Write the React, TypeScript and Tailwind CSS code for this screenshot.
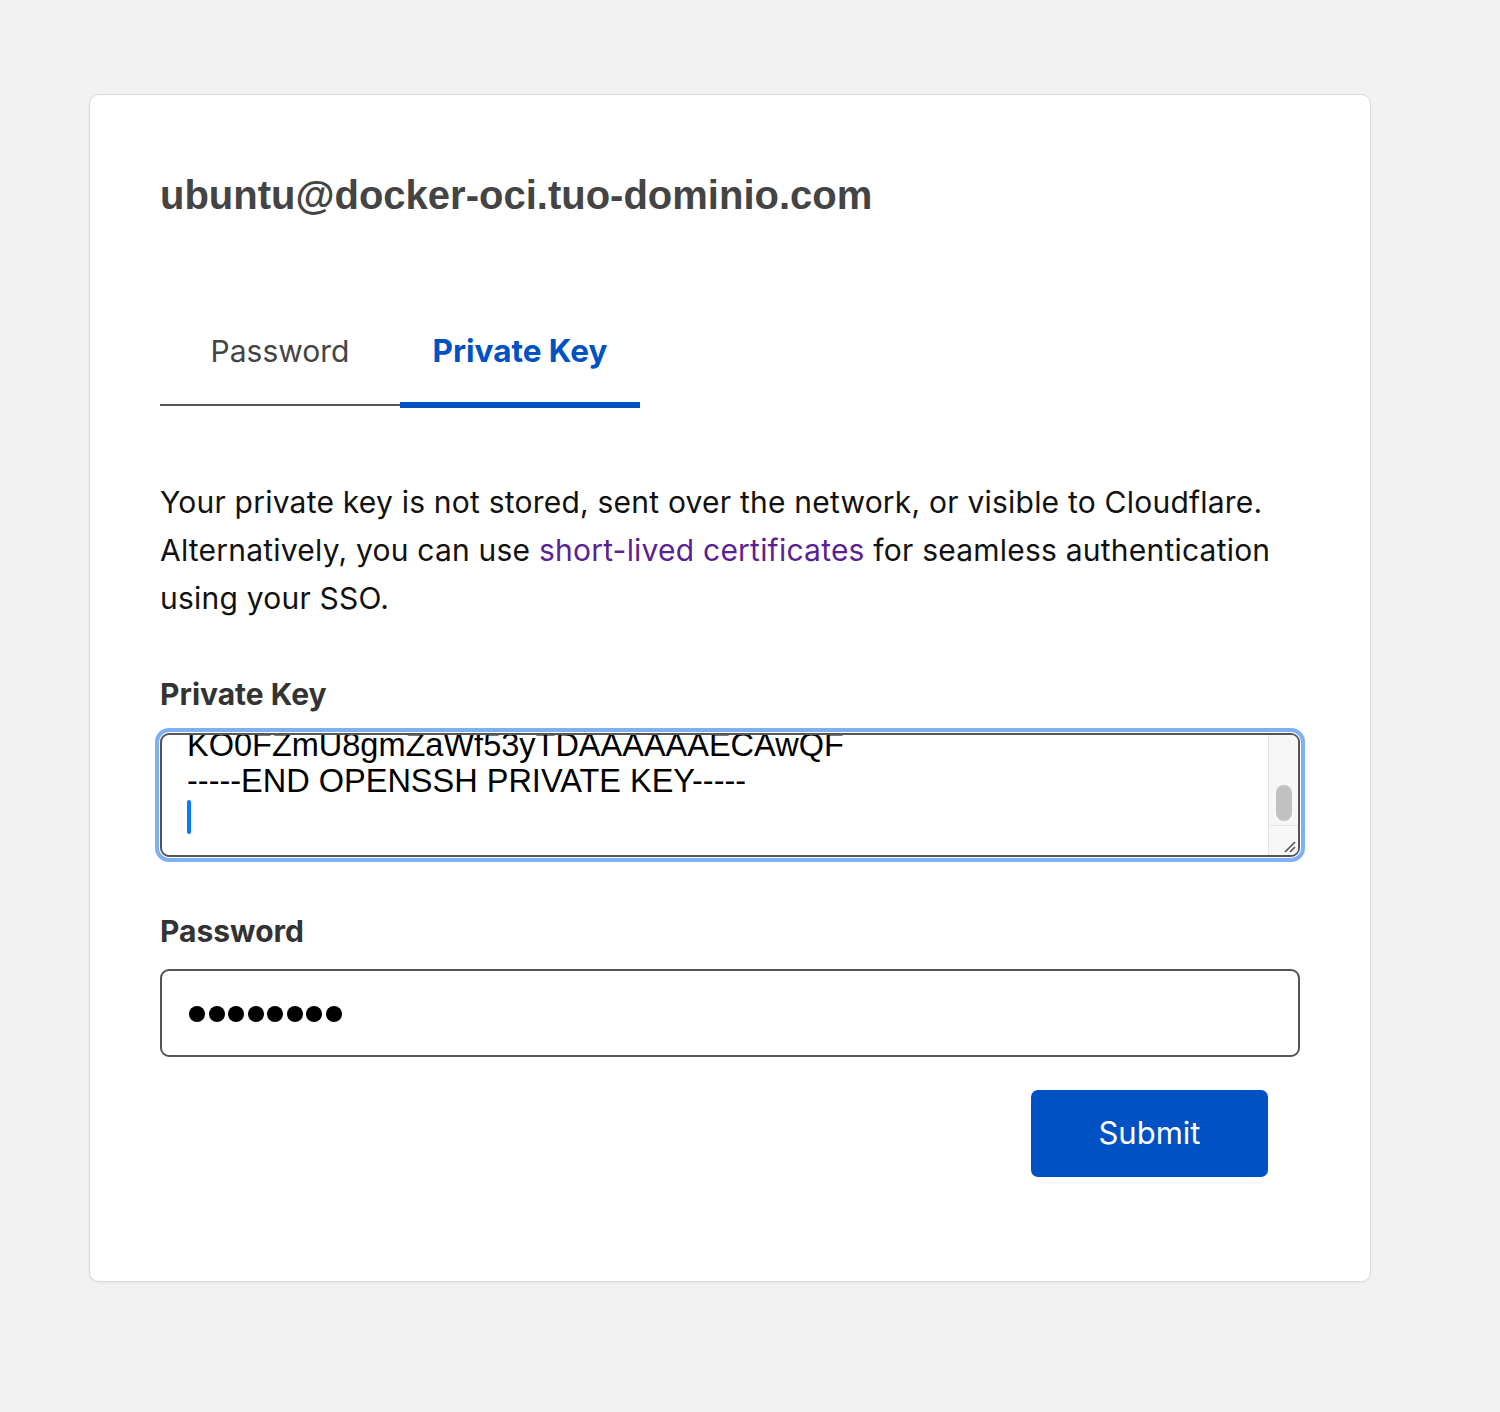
import React from 'react';

const PasswordDots = ({ count }: { count: number }) => (
  <div className="flex items-center gap-[3.5px]">
    {Array.from({ length: count }).map((_, i) => (
      <span key={i} className="block w-[16px] h-[16px] rounded-full bg-black" />
    ))}
  </div>
);

export default function App() {
  return (
    <div className="min-h-[1412px] bg-[#f2f2f2] pt-[94px] pl-[89px] font-['Inter',sans-serif]">
      <div className="w-[1282px] h-[1188px] bg-white border border-[#dcdcdc] rounded-[10px] shadow-[0_1px_3px_rgba(0,0,0,0.06)] px-[70px] pt-[76px]">
        <h1 className="font-['Liberation_Sans',Arial,sans-serif] font-bold text-[40px] leading-[48px] text-[#444]">
          ubuntu@docker-oci.tuo-dominio.com
        </h1>

        {/* tabs */}
        <div className="mt-[109px] flex items-start">
          <div className="w-[240px] h-[78px] flex items-start justify-center border-b-2 border-[#555] pt-[3px]">
            <span className="text-[30px] leading-[40px] text-[#444]">Password</span>
          </div>
          <div className="w-[240px] h-[80px] flex items-start justify-center border-b-[6px] border-[#0051c3] pt-[3px]">
            <span className="text-[31.5px] leading-[40px] font-bold text-[#0051c3]">Private Key</span>
          </div>
        </div>

        <p className="mt-[70px] text-[30px] leading-[48px] tracking-[0.22px] text-[#111]">
          Your private key is not stored, sent over the network, or visible to Cloudflare.
          <br />
          Alternatively, you can use <a className="text-[#5b1f96]">short-lived certificates</a> for seamless authentication using your SSO.
        </p>

        <label className="block mt-[52px] text-[30px] leading-[40px] font-bold text-[#333]">Private Key</label>
        <div className="mt-[14px] -mx-[5px] border-[4px] border-[#7eb0f5] p-[1px] rounded-[14px]">
          <div className="relative h-[124px] bg-white border-2 border-[#555] rounded-[9px] overflow-hidden font-['Liberation_Sans',Arial,sans-serif] text-[32.5px] leading-[36px] text-black">
            <div className="pl-[25px] -mt-[8px]">
              <div>KO0FZmU8gmZaWf53yTDAAAAAAECAwQF</div>
              <div>-----END OPENSSH PRIVATE KEY-----</div>
              <div className="h-[36px] flex items-center">
                <span className="block w-[4px] h-[34px] bg-[#0a7aff] rounded-sm" />
              </div>
            </div>
            {/* scrollbar */}
            <div className="absolute right-0 top-0 bottom-0 w-[30px] bg-[#f7f7f7] border-l border-[#e6e6e6]">
              <div className="absolute left-[7px] top-[50px] w-[16px] h-[36px] rounded-full bg-[#c1c1c1]" />
              <div className="absolute left-0 right-0 bottom-0 h-[30px] border-t border-[#e6e6e6]">
                <svg className="absolute right-[2px] bottom-[2px]" width="16" height="16" viewBox="0 0 16 16">
                  <path d="M15 5 L5 15 M15 10 L10 15" stroke="#555" strokeWidth="1.6" />
                </svg>
              </div>
            </div>
          </div>
        </div>

        <label className="block mt-[49px] text-[30px] leading-[40px] font-bold text-[#333]">Password</label>
        <div className="mt-[18px] h-[88px] border-2 border-[#555] rounded-[9px] flex items-center pl-[27px] pt-[2px]">
          <PasswordDots count={8} />
        </div>

        <div className="flex justify-end pr-[32px] mt-[33px]">
          <button className="w-[237px] h-[87px] bg-[#0051c3] rounded-[7px] text-white text-[31px]">Submit</button>
        </div>
      </div>
    </div>
  );
}
